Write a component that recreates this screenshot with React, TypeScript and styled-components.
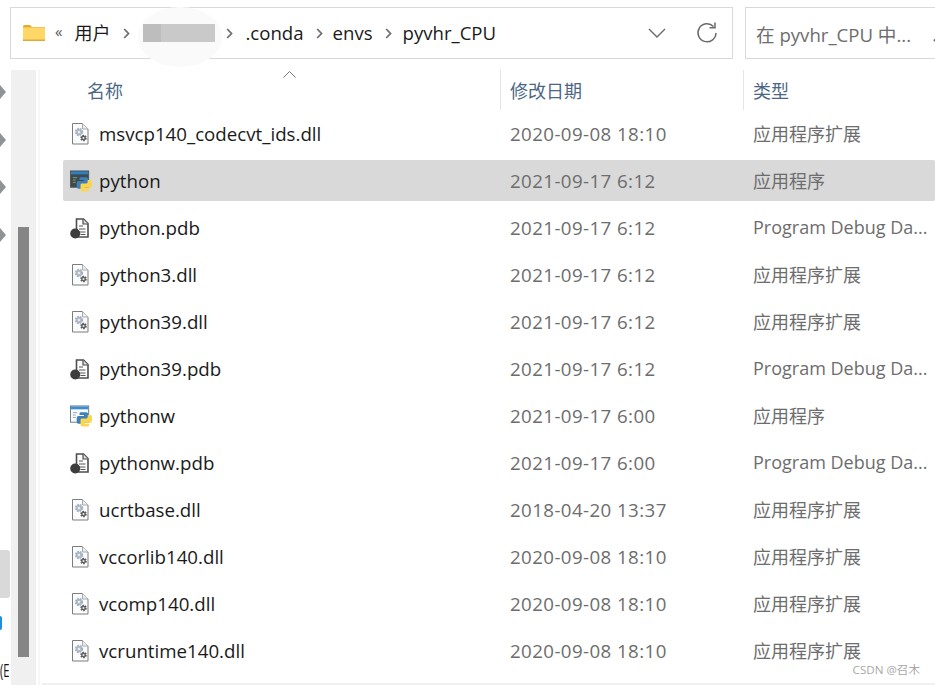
import styled, { createGlobalStyle } from "styled-components";
import { FC } from "react";

const GlobalStyle = createGlobalStyle`
  html, body {
    margin: 0;
    padding: 0;
    background: #fff;
    overflow: hidden;
  }
  body {
    font-family: "Open Sans", "Noto Sans CJK SC", sans-serif;
  }
`;

const Page = styled.div`
  width: 935px;
  height: 685px;
  overflow: hidden;
  position: relative;
  display: flex;
  flex-direction: column;
`;

const TopBar = styled.div`
  display: flex;
  gap: 12px;
  padding: 7px 0 0 10px;
  height: 70px;
  box-sizing: border-box;
  flex: none;
`;

const AddressBox = styled.div`
  width: 723px;
  height: 52px;
  flex: none;
  box-sizing: border-box;
  border: 1px solid #d9d9d9;
  display: flex;
  align-items: center;
  padding-left: 12px;
  color: #1a1a1a;
  font-size: 18.6px;
  position: relative;
  z-index: 0;
`;

const Crumb = styled.span`
  white-space: nowrap;
  line-height: 24px;
`;

const UserCrumb = styled(Crumb)`
  font-size: 18px;
`;

const Chevrons = styled.span`
  font-size: 15px;
  color: #555;
  margin: -4px 12px 0 9px;
  line-height: 1;
`;

const Blurred = styled.div`
  width: 72px;
  height: 18px;
  flex: none;
  position: relative;
  background: linear-gradient(90deg, #bdbdbd 0 18px, #c9c9c9 18px);
  &::before {
    content: "";
    position: absolute;
    left: -5px;
    top: -17px;
    width: 84px;
    height: 60px;
    border-radius: 50%;
    background: #fafafa;
    z-index: -1;
  }
`;

const Sep = styled.svg<{ $left: number; $right: number }>`
  width: 7px;
  height: 11px;
  flex: none;
  margin: 0 ${(p) => p.$right}px 0 ${(p) => p.$left}px;
`;

const Spacer = styled.div`
  flex: 1;
`;

const SearchBox = styled.div`
  width: 300px;
  height: 52px;
  flex: none;
  box-sizing: border-box;
  border: 1px solid #d9d9d9;
  display: flex;
  align-items: center;
  padding-left: 10px;
  gap: 22px;
  color: #6d6d6d;
  font-size: 18.6px;
  white-space: nowrap;
`;

const Body = styled.div`
  display: flex;
  flex: 1;
  min-height: 0;
`;

const NavStrip = styled.div`
  width: 11px;
  flex: none;
  display: flex;
  flex-direction: column;
  align-items: flex-start;
  padding-top: 15px;
  box-sizing: border-box;
  overflow: hidden;
`;

const NavArrow = styled.div`
  width: 0;
  height: 0;
  border-top: 7px solid transparent;
  border-bottom: 7px solid transparent;
  border-left: 6px solid #8e9396;
  margin-bottom: 33.5px;
  flex: none;
`;

const NavSelected = styled.div`
  width: 10px;
  height: 48px;
  flex: none;
  background: #d9d9d9;
  border-radius: 0 3px 3px 0;
  margin-top: 275px;
`;

const NavBlue = styled.div`
  width: 2px;
  height: 14px;
  background: #1e8fe0;
  border-radius: 0 2px 2px 0;
  flex: none;
  margin-top: 18px;
`;

const NavText = styled.div`
  font-size: 18px;
  line-height: 22px;
  color: #111;
  margin-top: 29px;
  white-space: nowrap;
  transform: scaleX(0.62);
  transform-origin: left center;
`;

const ScrollTrack = styled.div`
  width: 25px;
  flex: none;
  background: #f0f0f0;
  padding: 157px 7px 0;
  box-sizing: border-box;
`;

const ScrollThumb = styled.div`
  width: 11px;
  height: 430px;
  background: #868686;
`;

const PaneEdge = styled.div`
  width: 2px;
  flex: none;
  margin-left: 2px;
  background: #f7f7f7;
`;

const ListPane = styled.div`
  flex: 1;
  min-width: 0;
  display: flex;
  flex-direction: column;
  position: relative;
`;

const HeaderRow = styled.div`
  display: grid;
  grid-template-columns: 460px 243px 1fr;
  height: 40px;
  flex: none;
`;

const HeaderCell = styled.div<{ $pad: number }>`
  position: relative;
  padding-left: ${(p) => p.$pad}px;
  display: flex;
  align-items: center;
  font-size: 18px;
  color: #4c6785;
  & + & {
    border-left: 1px solid #e5e5e5;
  }
`;

const SortMark = styled.svg`
  position: absolute;
  left: 243px;
  top: 1px;
  width: 13px;
  height: 7px;
`;

const Rows = styled.div`
  display: flex;
  flex-direction: column;
  padding: 3px 0 0 23px;
  gap: 6px;
  flex: 1;
`;

const Row = styled.div<{ $selected?: boolean }>`
  display: grid;
  grid-template-columns: 438px 243px 1fr;
  height: 41px;
  flex: none;
  align-items: center;
  font-size: 18px;
  border-radius: 2px;
  background: ${(p) => (p.$selected ? "#d9d9d9" : "transparent")};
`;

const NameCell = styled.div`
  display: flex;
  align-items: center;
  padding-left: 7px;
  gap: 7px;
  color: #1a1a1a;
  font-size: 18.7px;
  white-space: nowrap;
`;

const IconBox = styled.svg`
  width: 22px;
  height: 24px;
  flex: none;
`;

const MutedCell = styled.div`
  color: #6d6d6d;
  padding-left: 9px;
  white-space: nowrap;
  overflow: hidden;
`;

const DateCell = styled(MutedCell)`
  font-size: 18.7px;
  letter-spacing: 0.42px;
`;

const TypeCell = styled(MutedCell)`
  padding-bottom: 2px;
`;

const BottomLine = styled.div`
  height: 2px;
  flex: none;
  margin-left: 2px;
  background: #f0f0f0;
`;

const Watermark = styled.div`
  position: absolute;
  right: 15px;
  bottom: 8px;
  font-size: 11.6px;
  color: #a8a8a8;
`;

const FolderIcon = () => (
  <svg width="23" height="18" viewBox="0 0 23 18" style={{ flex: "none" }}>
    <path d="M0 2.5 Q0 1 1.5 1 H7 L9 3 H0 Z" fill="#e6a92e" />
    <rect x="0" y="3" width="22" height="14" fill="#ffd766" />
    <rect x="0" y="15.5" width="22" height="1.5" fill="#e2aa35" />
    <rect x="0" y="3" width="22" height="1" fill="#f3c452" />
  </svg>
);

const DllIcon = () => (
  <IconBox viewBox="0 0 22 24">
    <path d="M2.5 1.5 H12.5 L18 7 V22 H2.5 Z" fill="#fbfcfd" stroke="#7d7d7d" strokeWidth="1" />
    <path d="M12.5 1.5 V7 H18" fill="#eceff2" stroke="#a9a9a9" strokeWidth="1" />
    <circle cx="9" cy="10" r="3.2" fill="#b4bfcc" stroke="#a5b0bd" strokeWidth="2" strokeDasharray="1.6 1" />
    <circle cx="9" cy="10" r="1.1" fill="#f4f6f8" />
    <circle cx="13.5" cy="16" r="2.4" fill="#666" stroke="#5a5a5a" strokeWidth="1.8" strokeDasharray="1.4 .9" />
    <circle cx="13.5" cy="16" r="1" fill="#e8e8e8" />
  </IconBox>
);

const PdbIcon = () => (
  <IconBox viewBox="0 0 22 24">
    <path d="M6.5 3 H13.5 L18 7.5 V21 H6.5 Z" fill="#fff" stroke="#4d4d4d" strokeWidth="1.6" />
    <path d="M13 3 V8 H18" fill="#ddd" stroke="#4d4d4d" strokeWidth="1.2" />
    <path d="M9 10 H13 M9 13 H15.5 M9 16 H15.5 M10.5 18.5 H15.5" stroke="#555" strokeWidth="1.2" />
    <circle cx="5.2" cy="17.5" r="5" fill="#3d3d3d" />
  </IconBox>
);

const snakePath =
  "M11 8 H17 A2 2 0 0 1 19 10 V15 A1.5 1.5 0 0 1 17.5 16.5 H13 A1.5 1.5 0 0 0 11.5 18 V20 H9 A2 2 0 0 1 7 18 V14 A2 2 0 0 1 9 12 H14.5 V11 H10 V9 A1 1 0 0 1 11 8 Z";

const Snake = () => (
  <>
    <path d={snakePath} fill="#3f80b8" />
    <path d={snakePath} fill="#fbd64f" transform="rotate(180 15 15.5)" />
  </>
);

const ConsoleIcon = () => (
  <IconBox viewBox="0 0 23 24">
    <rect x="0.5" y="1.5" width="19" height="17" fill="#3d4a52" stroke="#555" strokeWidth="1" />
    <rect x="1" y="2" width="18" height="3" fill="#2f7fbf" />
    <path d="M3 8.5 H7.5 M3 11 H6 M3 13.5 H6" stroke="#7fa070" strokeWidth="1" />
    <Snake />
  </IconBox>
);

const WindowIcon = () => (
  <IconBox viewBox="0 0 23 24">
    <rect x="0.5" y="1.5" width="19" height="17" fill="#f8fafc" stroke="#6b7b88" strokeWidth="1" />
    <rect x="1" y="2" width="18" height="3" fill="#3a8ed0" />
    <path d="M3 8.5 H7.5 M3 11 H6 M3 13.5 H6" stroke="#9aa5ae" strokeWidth="1" />
    <Snake />
  </IconBox>
);

type Kind = "dll" | "pdb" | "console" | "window";

const icons: Record<Kind, FC> = {
  dll: DllIcon,
  pdb: PdbIcon,
  console: ConsoleIcon,
  window: WindowIcon,
};

const files: { name: string; date: string; type: string; kind: Kind; selected?: boolean }[] = [
  { name: "msvcp140_codecvt_ids.dll", date: "2020-09-08 18:10", type: "应用程序扩展", kind: "dll" },
  { name: "python", date: "2021-09-17 6:12", type: "应用程序", kind: "console", selected: true },
  { name: "python.pdb", date: "2021-09-17 6:12", type: "Program Debug Da...", kind: "pdb" },
  { name: "python3.dll", date: "2021-09-17 6:12", type: "应用程序扩展", kind: "dll" },
  { name: "python39.dll", date: "2021-09-17 6:12", type: "应用程序扩展", kind: "dll" },
  { name: "python39.pdb", date: "2021-09-17 6:12", type: "Program Debug Da...", kind: "pdb" },
  { name: "pythonw", date: "2021-09-17 6:00", type: "应用程序", kind: "window" },
  { name: "pythonw.pdb", date: "2021-09-17 6:00", type: "Program Debug Da...", kind: "pdb" },
  { name: "ucrtbase.dll", date: "2018-04-20 13:37", type: "应用程序扩展", kind: "dll" },
  { name: "vccorlib140.dll", date: "2020-09-08 18:10", type: "应用程序扩展", kind: "dll" },
  { name: "vcomp140.dll", date: "2020-09-08 18:10", type: "应用程序扩展", kind: "dll" },
  { name: "vcruntime140.dll", date: "2020-09-08 18:10", type: "应用程序扩展", kind: "dll" },
];

const Separator: FC<{ left: number; right: number }> = ({ left, right }) => (
  <Sep $left={left} $right={right} viewBox="0 0 7 11">
    <path d="M1.2 1 L5.5 5.5 L1.2 10" fill="none" stroke="#6f6f6f" strokeWidth="1.8" />
  </Sep>
);

const App = () => (
  <Page>
    <GlobalStyle />
    <TopBar>
      <AddressBox>
        <FolderIcon />
        <Chevrons>«</Chevrons>
        <UserCrumb>用户</UserCrumb>
        <Separator left={13} right={13} />
        <Blurred />
        <Separator left={11} right={12} />
        <Crumb>.conda</Crumb>
        <Separator left={12} right={10} />
        <Crumb>envs</Crumb>
        <Separator left={12} right={11} />
        <Crumb>pyvhr_CPU</Crumb>
        <Spacer />
        <svg width="18" height="10" viewBox="0 0 18 10" style={{ flex: "none", marginRight: 30 }}>
          <path d="M1 1 L9 9 L17 1" fill="none" stroke="#6a6a6a" strokeWidth="1.4" />
        </svg>
        <svg width="22" height="22" viewBox="0 0 22 22" style={{ flex: "none", marginRight: 14 }}>
          <path d="M17.5 4.5 A9 9 0 1 0 20 11" fill="none" stroke="#6a6a6a" strokeWidth="1.5" />
          <path d="M13.5 5.8 H19 V0.5" fill="none" stroke="#6a6a6a" strokeWidth="1.5" />
        </svg>
      </AddressBox>
      <SearchBox>
        <span>在 pyvhr_CPU 中...</span>
        <svg width="18" height="18" viewBox="0 0 18 18" style={{ flex: "none" }}>
          <circle cx="11" cy="7" r="5.5" fill="none" stroke="#666" strokeWidth="1.5" />
          <path d="M7 11 L1 17" stroke="#666" strokeWidth="2" />
        </svg>
      </SearchBox>
    </TopBar>
    <Body>
      <NavStrip>
        <NavArrow />
        <NavArrow />
        <NavArrow />
        <NavArrow />
        <NavSelected />
        <NavBlue />
        <NavText>(E</NavText>
      </NavStrip>
      <ScrollTrack>
        <ScrollThumb />
      </ScrollTrack>
      <PaneEdge />
      <ListPane>
        <HeaderRow>
          <HeaderCell $pad={47}>
            名称
            <SortMark viewBox="0 0 13 7">
              <path d="M.5 6.5 L6.5 .5 L12.5 6.5" fill="none" stroke="#777" strokeWidth="1" />
            </SortMark>
          </HeaderCell>
          <HeaderCell $pad={9}>修改日期</HeaderCell>
          <HeaderCell $pad={9}>类型</HeaderCell>
        </HeaderRow>
        <Rows>
          {files.map((f) => {
            const Icon = icons[f.kind];
            return (
              <Row key={f.name} $selected={f.selected}>
                <NameCell>
                  <Icon />
                  {f.name}
                </NameCell>
                <DateCell>{f.date}</DateCell>
                <TypeCell>{f.type}</TypeCell>
              </Row>
            );
          })}
        </Rows>
        <BottomLine />
      </ListPane>
    </Body>
    <Watermark>CSDN @召木</Watermark>
  </Page>
);

export default App;
